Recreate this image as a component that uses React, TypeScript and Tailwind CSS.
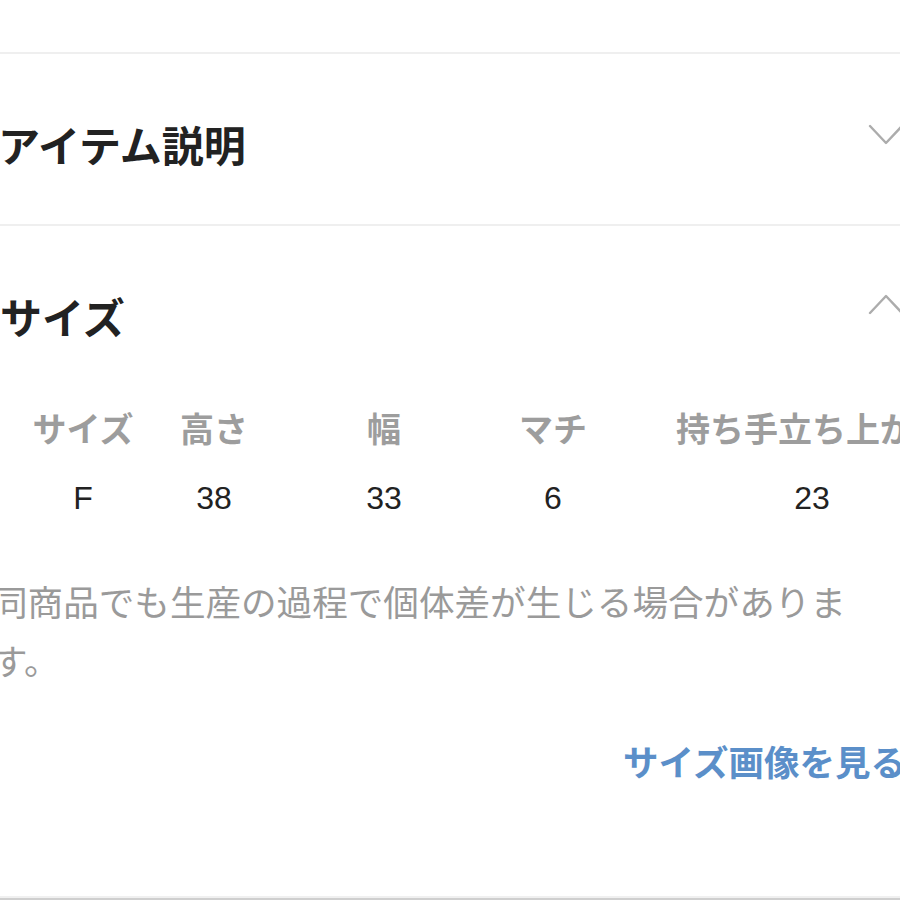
import { useState } from 'react';

const sizeCols = [
  { label: 'サイズ', value: 'F', w: 'w-[130px]' },
  { label: '高さ', value: '38', w: 'w-[132px]' },
  { label: '幅', value: '33', w: 'w-[208px]' },
  { label: 'マチ', value: '6', w: 'w-[130px]' },
  { label: '持ち手立ち上がり', value: '23', w: 'w-[388px]' },
];

function Chevron({ up }: { up?: boolean }) {
  return (
    <svg width="40" height="24" viewBox="0 0 40 24" className="shrink-0" fill="none">
      <path
        d={up ? 'M2 20 L18 3 L34 20' : 'M2 4 L18 21 L34 4'}
        stroke="#acacac"
        strokeWidth="2.4"
        strokeLinecap="round"
        strokeLinejoin="round"
      />
    </svg>
  );
}

export default function App() {
  const [open, setOpen] = useState({ desc: false, size: true });

  return (
    <div className="w-[900px] h-[900px] overflow-hidden bg-white relative font-['Noto_Sans_CJK_JP','Noto_Sans',sans-serif]">
      <div className="h-[52px]" />

      {/* アイテム説明 */}
      <div className="border-t-2 border-[#efefef]">
        <button
          onClick={() => setOpen({ ...open, desc: !open.desc })}
          className="w-[900px] h-[170px] flex items-center justify-between"
        >
          <span className="text-[42px] font-bold text-[#222] leading-none -ml-[2px] pt-[10px]">アイテム説明</span>
          <span className="mt-[-10px] pl-[868px] absolute">
            <Chevron up={open.desc} />
          </span>
        </button>
      </div>

      {/* サイズ */}
      <div className="border-t-2 border-[#efefef]">
        <button
          onClick={() => setOpen({ ...open, size: !open.size })}
          className="w-[900px] h-[184px] flex items-center justify-between"
        >
          <span className="text-[42px] font-bold text-[#222] leading-none pb-[4px]">サイズ</span>
          <span className="mt-[-26px] pl-[868px] absolute">
            <Chevron up={open.size} />
          </span>
        </button>

        {open.size && (
          <div>
            <div className="flex pl-[18px] w-[1200px]">
              {sizeCols.map((c) => (
                <div key={c.label} className={`${c.w} shrink-0 text-center`}>
                  <div className="h-[36px] flex items-center justify-center text-[34px] font-semibold text-[#9d9d9d] leading-none whitespace-nowrap">
                    {c.label}
                  </div>
                  <div className="mt-[34px] h-[36px] flex items-center justify-center text-[32px] text-[#222] leading-none font-['Liberation_Sans','Noto_Sans_CJK_JP',sans-serif]">
                    {c.value}
                  </div>
                </div>
              ))}
            </div>

            <p className="mt-[55px] -ml-[8px] w-[874px] text-[35.6px] leading-[59px] text-[#9a9a9a]">
              同商品でも生産の過程で個体差が生じる場合があります。
            </p>

            <div className="mt-[52px] flex justify-end -mr-[6px]">
              <a className="h-[40px] flex items-center text-[35.5px] font-bold text-[#5b8fc9] leading-none whitespace-nowrap cursor-pointer">
                サイズ画像を見る
              </a>
            </div>
          </div>
        )}
      </div>

      <div className="absolute left-0 right-0 bottom-0 h-[4px] border-t-2 border-[#f0f0f0] bg-[#cfcfcf]" />
    </div>
  );
}
